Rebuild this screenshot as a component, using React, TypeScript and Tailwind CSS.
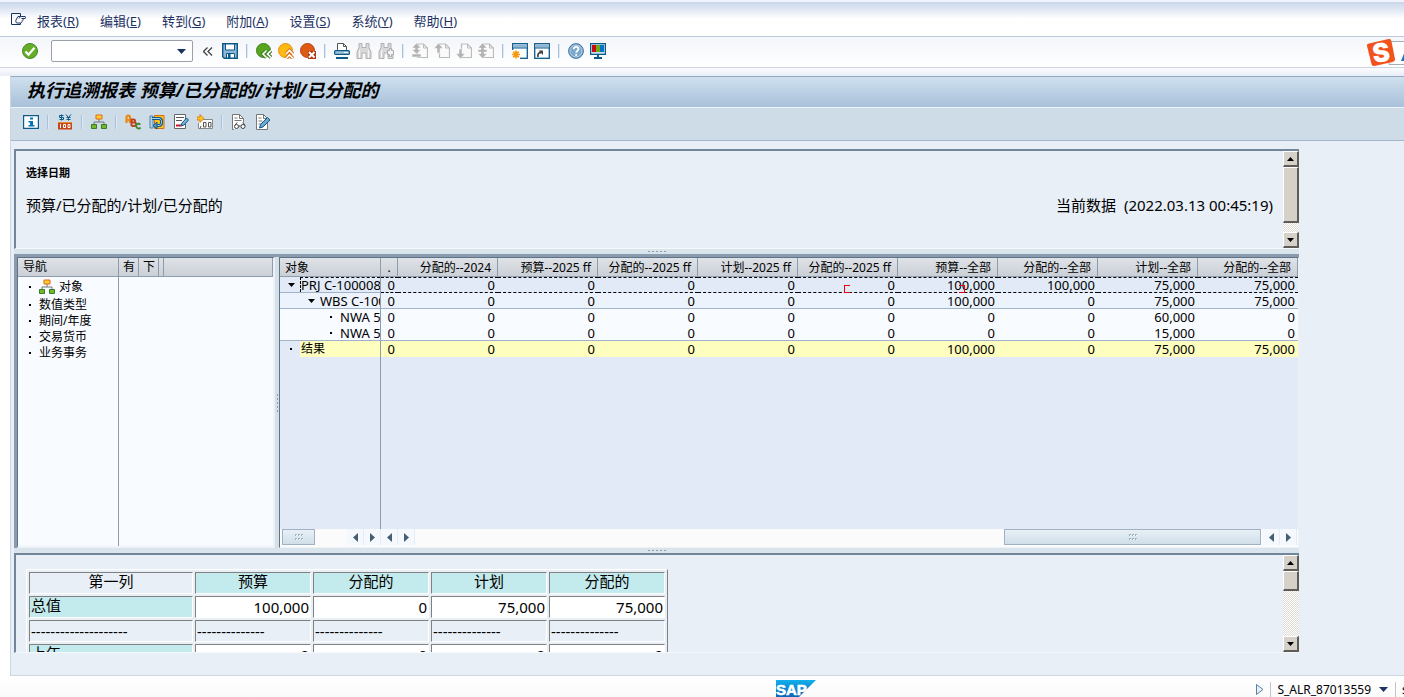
import React from 'react';
import clsx from 'clsx';

interface IconProps {
  children: React.ReactNode;
}

const Icon: React.FC<IconProps> = ({ children }) => (
  <svg width="16" height="16" viewBox="0 0 16 16" fill="none" aria-hidden="true">
    {children}
  </svg>
);

const CheckIcon = () => (
  <Icon>
    <circle cx="8" cy="8" r="7.5" fill="#65ae28" stroke="#468725" />
    <path d="M3.5 8.5l3 3.2 6-7" stroke="#fff" strokeWidth="2.2" />
  </Icon>
);

const SaveIcon = () => (
  <Icon>
    <path d="M.7.7h14.6v14.6H2.3L.7 13.7z" fill="#8fb8d6" stroke="#0b5a8a" strokeWidth="1.4" />
    <path d="M3.5 1h9v6h-9z" fill="#fff" stroke="#0b5a8a" />
    <path d="M4.5 10.5h8V15h-8z" fill="#fff" stroke="#0b5a8a" />
    <path d="M6 11h2.5v4H6z" fill="#0b5a8a" />
  </Icon>
);

const BackIcon = () => (
  <Icon>
    <circle cx="7.5" cy="7.5" r="7" fill="#58a51f" stroke="#3f7f22" />
    <path d="M10.5 7.5L7 11l3.5 3.5M15 7.5L11.5 11l3.5 3.5" stroke="#3f7f22" strokeWidth="3.8" />
    <path d="M10.5 7.5L7 11l3.5 3.5M15 7.5L11.5 11l3.5 3.5" stroke="#fff" strokeWidth="1.7" />
  </Icon>
);

const ExitIcon = () => (
  <Icon>
    <circle cx="7.5" cy="7.5" r="7" fill="#fdbb12" stroke="#ea8e13" />
    <path d="M8 11l3.5-3.5L15 11M8 15.5l3.5-3.5 3.5 3.5" stroke="#dd7010" strokeWidth="3.6" />
    <path d="M8 11l3.5-3.5L15 11M8 15.5l3.5-3.5 3.5 3.5" stroke="#fff" strokeWidth="1.6" />
  </Icon>
);

const CancelIcon = () => (
  <Icon>
    <circle cx="7.5" cy="7.5" r="7" fill="#dc5a14" stroke="#bb4410" />
    <path d="M8 8h8v8H8z" fill="#b43812" />
    <path d="M9 9l5.5 5.5M14.5 9L9 14.5" stroke="#fff" strokeWidth="2" />
  </Icon>
);

const PrintIcon = () => (
  <Icon>
    <path d="M3.5 7V.5h6l3 3V7" fill="#fff" stroke="#555" />
    <path d="M9.5.5v3h3" stroke="#555" />
    <rect x=".6" y="7.6" width="14.8" height="3.8" rx="1" fill="#9fc4de" stroke="#0b5a8a" strokeWidth="1.2" />
    <path d="M10 9.5h4" stroke="#fff" />
    <path d="M2 14h12v2H2z" fill="#0b5a8a" />
  </Icon>
);

const FindIcon = ({ next = false }: { next?: boolean }) => (
  <Icon>
    <path d="M3 .5h3v4h4v-4h3v4l2 4.5v6.500h-5V10H6v5.500H1V9l2-4.500z" fill="#d9d9d9" stroke="#b0b0b0" />
    <path d="M3.5 7v8M12.5 7v8" stroke="#f5f5f5" />
    {next && <path d="M9.5 7.5h2v-2h2v2h2v4h-2v2h-2v-2h-2z" fill="#f3f3f3" stroke="#aaa" />}
  </Icon>
);

const PageIcon = ({ arrows }: { arrows: string }) => (
  <Icon>
    <path d="M5.5 14.5h10V5L11.5 1h-6z" fill="#fafafa" stroke="#bbb" strokeWidth="1.2" />
    <path d="M11.5 1v4h4" stroke="#bbb" />
    <path d={arrows} fill="#b3b3b3" stroke="#fff" strokeWidth=".5" />
  </Icon>
);

const WindowIcon = ({ children }: { children: React.ReactNode }) => (
  <Icon>
    <rect x=".7" y=".7" width="14.6" height="14.6" fill="#fff" stroke="#0b5a8a" strokeWidth="1.3" />
    <path d="M1.5 1.5h13v3h-13z" fill="#8fb5d3" />
    <path d="M1 5h14" stroke="#0b5a8a" />
    {children}
  </Icon>
);

const HelpIcon = () => (
  <Icon>
    <circle cx="8" cy="8" r="7.4" fill="#7ba8cb" stroke="#3e75a3" />
    <circle cx="8" cy="8" r="6" stroke="#b4cfe2" />
    <path d="M5.7 6.2c0-3.300 4.800-3 4.800-.200 0 1.800-2.300 1.700-2.300 3.700M8.200 11v1.800" stroke="#fff" strokeWidth="1.8" />
  </Icon>
);

const MonitorIcon = () => (
  <Icon>
    <path d="M.6.6h14.800v10.800H.6z" fill="#c8dfef" stroke="#0b5a8a" strokeWidth="1.2" />
    <path d="M2 2h4v7H2z" fill="#c80c13" />
    <path d="M6 2h4v7H6z" fill="#6cad17" />
    <path d="M10 2h4v7h-4z" fill="#0574c5" />
    <path d="M8 11v3M4 15h8" stroke="#0b5a8a" strokeWidth="2" />
  </Icon>
);

const InfoIcon = () => (
  <Icon>
    <path d="M.6 1.600h14.800v12.800H.6z" fill="#fff" stroke="#0b5a8a" strokeWidth="1.2" />
    <path d="M7 3.5h3v2H7zM5.5 7H10v4h1.5v1.5h-6V11H7V8.5H5.5z" fill="#0574b5" />
  </Icon>
);

const CurrencyIcon = () => (
  <Icon>
    <path d="M6.5 1.5h-4v2h4v2h-4M4.5.5v6M9 .5l2.5 3 2.5-3M11.5 3v3.5M9.5 3.5h4M9.5 5.5h4" stroke="#0b5a8a" />
    <path d="M1 8h14v7.5H1z" fill="#c8441a" />
    <path d="M3.5 10v4M6.5 10.5h2v3h-2zM11 10.5h2v3h-2z" stroke="#fff" />
    <path d="M1 8.5h14" stroke="#e8912a" />
  </Icon>
);

const HierarchyIcon = () => (
  <Icon>
    <path d="M8 5v3M3 11V8h10v3" stroke="#777" />
    <path d="M5 1h6v4H5z" fill="#ffd02a" stroke="#e2661a" />
    <path d="M.5 10.5h5v4h-5zM10.5 10.5h5v4h-5z" fill="#74b823" stroke="#377c2b" />
  </Icon>
);

const AbcIcon = () => (
  <Icon>
    <path d="M1.5 9V3.5C1.5 1 5 1 5 3.5V9M1.5 6H5" stroke="#e78b15" strokeWidth="2.2" />
    <path d="M6.5 4.5V12M6.5 5.5h2.5c1.5 0 1.5 3 0 3H7h2.5c2 0 2 3.5 0 3.5h-3" stroke="#c1441c" strokeWidth="2" />
    <path d="M15.5 10.5c-3-2-5 0-4 2.5.8 2 3 2 4 .5" stroke="#3f8733" strokeWidth="2" />
  </Icon>
);

const SwapIcon = () => (
  <Icon>
    <path d="M5.5 1.5h9.5v13H5.5z" fill="#ffc51d" stroke="#da6b15" />
    <path d="M1 2h3v12H1z" fill="#b5d2e6" stroke="#4d85ad" />
    <path d="M3 4.5h7c3.5 0 3.5 7 0 7H7" stroke="#0b5a8a" strokeWidth="3" />
    <path d="M3 4.5h7c3.5 0 3.5 7 0 7H7" stroke="#b5d2e6" />
    <path d="M8 8L4 11.5 8 15z" fill="#5d94bb" stroke="#0b5a8a" />
  </Icon>
);

const EditTextIcon = () => (
  <Icon>
    <path d="M1.5.5h11v14h-11z" fill="#fff" stroke="#666" />
    <path d="M3 3.5h8M3 6.5h6" stroke="#555" />
    <path d="M3 10.5h5v2H3z" fill="#c8142c" />
    <path d="M8 12l1-3 4.5-5 2 2L11 11z" fill="#7fb2d6" stroke="#0b5a8a" />
  </Icon>
);

const DecimalsIcon = () => (
  <Icon>
    <path d="M6 5.5h9.5v9H1.5V9" fill="#fff" stroke="#888" />
    <path d="M0 3h3V.5l4 4-4 4V6H0z" fill="#ffc61c" stroke="#e07013" strokeWidth=".8" />
    <path d="M3 14.5l1-2.5M6.5 8.5h2.5V13H6.5zM11.5 8.5H14V13h-2.5z" stroke="#555" />
  </Icon>
);

const ViewDocIcon = () => (
  <Icon>
    <path d="M3 15.5H1.5V.5h7l4 4v4" fill="#fff" stroke="#777" />
    <path d="M8.5.5v4h4M3.5 4h3M3.5 6.5h7" stroke="#777" />
    <path d="M6 8.5l-2 3M12 8.5l2 3" stroke="#444" />
    <circle cx="5.5" cy="12.5" r="2" fill="#fff" stroke="#444" />
    <circle cx="12" cy="12.5" r="2" fill="#fff" stroke="#444" />
    <path d="M7.5 12h2" stroke="#444" />
  </Icon>
);

const EditDocIcon = () => (
  <Icon>
    <path d="M1.5.5h7l4 4v11h-11z" fill="#fff" stroke="#777" />
    <path d="M8.5.5v4h4M3.5 4h3M3.5 7h4M3.5 10h3" stroke="#777" />
    <path d="M4.5 14l1-3.5 7-7 2.5 2.5-7 7z" fill="#6fa6cc" stroke="#0b5a8a" />
  </Icon>
);

interface ToolItem {
  label: string;
  icon: React.ReactNode;
}

const navTools: ToolItem[][] = [
  [
    { label: '返回', icon: <BackIcon /> },
    { label: '退出', icon: <ExitIcon /> },
    { label: '取消', icon: <CancelIcon /> },
  ],
  [
    { label: '打印', icon: <PrintIcon /> },
    { label: '查找', icon: <FindIcon /> },
    { label: '继续查找', icon: <FindIcon next /> },
  ],
  [
    { label: '首页', icon: <PageIcon arrows="M4.5 0L9 5H6v1.5h3L4.5 11H9v3H0v-3h4.5L0 6.5h3V5H0z" /> },
    { label: '上一页', icon: <PageIcon arrows="M4.5 0L9 5.5H6V10H3V5.5H0z" /> },
    { label: '下一页', icon: <PageIcon arrows="M4.5 16L9 10.5H6V6H3v4.5H0z" /> },
    { label: '末页', icon: <PageIcon arrows="M4.5 0L9 5H6v1.5h3V9H6v1.5h3L4.5 15.5 0 10.5h3V9H0V6.5h3V5H0z" /> },
  ],
  [
    {
      label: '新建会话',
      icon: (
        <WindowIcon>
          <path d="M0 7h8v9H0z" fill="#fff" />
          <path d="M4 7.5v8M0 11.5h8M1.2 8.7l5.6 5.6M6.8 8.7l-5.600 5.600" stroke="#f49a12" strokeWidth="1.7" />
        </WindowIcon>
      ),
    },
    {
      label: '快捷方式',
      icon: (
        <WindowIcon>
          <path d="M4 14c-.5-3 .5-4.5 3-4.5" stroke="#444" strokeWidth="1.8" />
          <path d="M4.5 7.5H9V12z" fill="#444" />
        </WindowIcon>
      ),
    },
  ],
  [
    { label: '帮助', icon: <HelpIcon /> },
    { label: '定制布局', icon: <MonitorIcon /> },
  ],
];

const reportTools: ToolItem[][] = [
  [{ label: '信息', icon: <InfoIcon /> }],
  [{ label: '货币', icon: <CurrencyIcon /> }],
  [{ label: '层次', icon: <HierarchyIcon /> }],
  [
    { label: '文本', icon: <AbcIcon /> },
    { label: '交换', icon: <SwapIcon /> },
    { label: '编辑文本', icon: <EditTextIcon /> },
    { label: '小数位', icon: <DecimalsIcon /> },
  ],
  [
    { label: '显示凭证', icon: <ViewDocIcon /> },
    { label: '更改凭证', icon: <EditDocIcon /> },
  ],
];

const menus = [
  ['报表', 'R'],
  ['编辑', 'E'],
  ['转到', 'G'],
  ['附加', 'A'],
  ['设置', 'S'],
  ['系统', 'Y'],
  ['帮助', 'H'],
];

const columns = [
  '分配的--2024',
  '预算--2025 ff',
  '分配的--2025 ff',
  '计划--2025 ff',
  '分配的--2025 ff',
  '预算--全部',
  '分配的--全部',
  '计划--全部',
  '分配的--全部',
];

interface Row {
  name: string;
  kind: 'prj' | 'wbs' | 'nwa' | 'nwaLast' | 'total';
  values: string[];
}

const rows: Row[] = [
  { name: 'PRJ C-100008', kind: 'prj', values: ['0', '0', '0', '0', '0', '0', '100,000', '100,000', '75,000', '75,000'] },
  { name: 'WBS C-100', kind: 'wbs', values: ['0', '0', '0', '0', '0', '0', '100,000', '0', '75,000', '75,000'] },
  { name: 'NWA 5', kind: 'nwa', values: ['0', '0', '0', '0', '0', '0', '0', '0', '60,000', '0'] },
  { name: 'NWA 5', kind: 'nwaLast', values: ['0', '0', '0', '0', '0', '0', '0', '0', '15,000', '0'] },
  { name: '结果', kind: 'total', values: ['0', '0', '0', '0', '0', '0', '100,000', '0', '75,000', '75,000'] },
];

const cellStyles = {
  prj: 'border-y border-dashed border-black bg-[#e1eaf6]',
  wbs: 'border-b border-[#9fb3cb] bg-[#ecf3fc]',
  nwa: 'bg-[#f8fbff]',
  nwaLast: 'border-b border-[#9fb3cb] bg-[#f8fbff]',
  total: 'bg-[#fefebf]',
};

const nameCellStyles = {
  prj: 'border-b border-[#9fb3cb] bg-[#e1eaf6]',
  wbs: 'border-b border-[#9fb3cb] bg-[#ecf3fc]',
  nwa: 'bg-[#f8fbff]',
  nwaLast: 'border-b border-[#9fb3cb] bg-[#f8fbff]',
  total: 'bg-[#e1eaf6]',
};

const indentStyles = { prj: 'pl-0', wbs: 'pl-5', nwa: 'pl-10', nwaLast: 'pl-10', total: 'pl-0' };

const Separator = ({ className }: { className?: string }) => (
  <span className={clsx('h-3.5 w-0.5 border-l border-[#a9c1dc] bg-[#dfe9f4]', className)} />
);

const ToolButton: React.FC<{ item: ToolItem }> = ({ item }) => (
  <button type="button" aria-label={item.label} className="size-4 shrink-0">
    {item.icon}
  </button>
);

const Bullet = () => <span className="size-0.5 bg-black" />;

const Grip = () => (
  <span className="grid grid-cols-3 gap-x-px gap-y-0.5">
    {[0, 1, 2, 3, 4, 5].map((i) => (
      <span key={i} className="size-0.5 border-t border-l border-[#9fb2c3] bg-white" />
    ))}
  </span>
);

const ArrowButton = ({ dir, label }: { dir: 'left' | 'right'; label: string }) => (
  <button
    type="button"
    aria-label={label}
    className="flex h-4 w-[17px] shrink-0 items-center justify-center border-r border-[#e6ecf3] bg-[#f5f8fc]"
  >
    <svg width="5" height="9" viewBox="0 0 5 9" aria-hidden="true">
      <path d={dir === 'left' ? 'M5 0v9L0 4.5z' : 'M0 0v9l5-4.5z'} fill="#445f73" />
    </svg>
  </button>
);

const ScrollThumb = ({ className }: { className?: string }) => (
  <button
    type="button"
    aria-label="滚动"
    className={clsx(
      'flex h-4 items-center justify-center border border-[#9fb1c3] bg-linear-to-b from-[#e8f0f5] to-[#d0dfe9]',
      className,
    )}
  >
    <Grip />
  </button>
);

const bevel =
  'flex w-4 shrink-0 items-center justify-center border-t border-l border-r-2 border-b-2 border-t-white border-l-white border-r-[#5f5c58] border-b-[#5f5c58] bg-[#d5d0c8]';

// Classic vertical scroll bar: two arrow buttons, thumb and dithered track
const VerticalBar = ({ thumb }: { thumb: string }) => (
  <div className="flex w-4 shrink-0 flex-col bg-[repeating-conic-gradient(#dedbd5_0_25%,#ffffff_0_50%)] bg-[length:2px_2px]">
    <button type="button" aria-label="向上" className={clsx(bevel, 'h-4')}>
      <svg width="7" height="4" viewBox="0 0 7 4" aria-hidden="true">
        <path d="M0 4h7L3.5 0z" fill="#000" />
      </svg>
    </button>
    <button type="button" aria-label="滑块" className={clsx(bevel, thumb)} />
    <button type="button" aria-label="向下" className={clsx(bevel, 'mt-auto h-4')}>
      <svg width="7" height="4" viewBox="0 0 7 4" aria-hidden="true">
        <path d="M0 0h7L3.5 4z" fill="#000" />
      </svg>
    </button>
  </div>
);

const Splitter = () => (
  <div className="flex h-[5px] shrink-0 items-center justify-center gap-0.5 bg-[#dae4ec]">
    {[0, 1, 2, 3, 4].map((i) => (
      <span key={i} className="h-px w-0.5 bg-[#8f9ba6]" />
    ))}
  </div>
);

const headCell =
  'border-r border-b border-r-[#8e9dad] border-b-[#8e9dad] bg-linear-to-b from-[#dfe3e8] to-[#cbd0d7] pt-px pb-0 font-normal text-xs';

const MenuBar = () => (
  <nav className="flex h-[37px] shrink-0 items-center border-t-2 border-b border-t-[#f0f4fa] border-b-[#bfc9dc] bg-linear-to-b from-[#c9d6ea] to-white to-50% pt-1.5 pl-[11px] text-[13px] text-[#1c3263]">
    <svg width="15" height="13" viewBox="0 0 15 13" fill="none" className="mr-[11px] mb-1.5" aria-hidden="true">
      <path d="M9.5 3V.5h-9v11h9V10" stroke="#1c3263" />
      <path
        d="M8 5.5L9.5 3.5H14c1 0 1 2 0 2h-3.5M12 5.5c.5 2 0 2-.5 2M11 7.5c.5 2-.5 2-1.5 2.5H6c-1.5 0-1.5-3-.5-4L7 3.5h2.5"
        stroke="#1c3263"
      />
    </svg>
    <div className="flex gap-[21px]">
      {menus.map(([text, key]) => (
        <button type="button" key={text} className="whitespace-nowrap">
          {text}(<u>{key}</u>)
        </button>
      ))}
    </div>
  </nav>
);

const CommandBar = () => (
  <div className="flex h-[31px] shrink-0 items-center gap-1.5 border-b border-[#ccd4e2] bg-linear-to-b from-[#f3f6fa] to-white pb-0.5 pl-[22px]">
    <ToolButton item={{ label: '确认', icon: <CheckIcon /> }} />
    <div className="ml-[7px] flex h-[22px] w-[142px] items-center rounded-xs border border-[#9aa0a8] bg-white">
      <input type="text" aria-label="命令" className="min-w-0 flex-1 px-1 text-[13px] outline-none" />
      <button type="button" aria-label="打开列表" className="px-1.5">
        <svg width="9" height="5" viewBox="0 0 9 5" aria-hidden="true">
          <path d="M0 0h9L4.5 5z" fill="#1c3263" />
        </svg>
      </button>
    </div>
    <button type="button" aria-label="收起" className="mr-px ml-1 w-3">
      <svg width="10" height="9" viewBox="0 0 10 9" fill="none" aria-hidden="true">
        <path d="M4.5.5l-4 4 4 4M9 .5l-4 4 4 4" stroke="#444" strokeWidth="1.3" />
      </svg>
    </button>
    <ToolButton item={{ label: '保存', icon: <SaveIcon /> }} />
    {navTools.map((group) => (
      <React.Fragment key={group[0].label}>
        <Separator className="mx-0.5" />
        {group.map((item) => (
          <ToolButton key={item.label} item={item} />
        ))}
      </React.Fragment>
    ))}
  </div>
);

// Input method bar that floats over the right edge of the window
const ImeBadge = () => (
  <div className="absolute top-[39px] right-0 flex w-[37px] items-center overflow-hidden">
    <svg width="37" height="28" viewBox="0 0 37 28" aria-label="输入法">
      <path d="M22 2.5h16v23H22z" fill="#fff" stroke="#a9adb5" />
      <path d="M2 4.5Q-.5 5 0 7l4.5 18q.5 2.5 3 2l18-4q3-.7 2.5-3L24.5 2.5Q24-.5 21.5 0z" fill="#f2531d" />
      <text
        x="14"
        y="23"
        textAnchor="middle"
        fontFamily="Inter, sans-serif"
        fontWeight="900"
        fontSize="26"
        fill="#fff"
        transform="rotate(-8 14 14)"
      >
        S
      </text>
      <path d="M34 22l4-10v10z" fill="#1f72c4" />
    </svg>
  </div>
);

const NavigationPanel = () => (
  <section className="flex w-[258px] shrink-0 flex-col border-t border-r-2 border-b-2 border-l border-t-[#5f7489] border-r-[#edf2f6] border-b-[#edf2f6] border-l-[#5f7489] bg-[#f8fbff]">
    <div className="flex h-[19px] shrink-0 leading-[18px]">
      <div className={clsx(headCell, 'w-[101px] pl-[5px]')}>导航</div>
      <div className={clsx(headCell, 'w-5 pl-1')}>有</div>
      <div className={clsx(headCell, 'w-5 pl-1')}>下</div>
      <div className={clsx(headCell, 'w-[5px]')} />
      <div className={clsx(headCell, 'flex-1')} />
    </div>
    <div className="flex min-h-0 flex-1 text-xs leading-4">
      <ul className="w-[101px] border-r border-[#8e9dad]">
        <li className="flex h-5 items-center pl-[11px]">
          <Bullet />
          <span className="mr-1 ml-2">
            <HierarchyIcon />
          </span>
          对象
        </li>
        {['数值类型', '期间/年度', '交易货币', '业务事务'].map((text) => (
          <li key={text} className="flex h-4 items-center gap-2 pl-[11px]">
            <Bullet />
            {text}
          </li>
        ))}
      </ul>
    </div>
  </section>
);

const ReportGrid = () => (
  <section className="flex min-w-0 flex-1 flex-col border border-t-[#5f7489] border-r-[#edf2f6] border-b-[#edf2f6] border-l-[#5f7489] bg-[#e1eaf6]">
    <table className="w-full table-fixed border-separate border-spacing-0 text-[13px] leading-[14px]">
      <colgroup>
        <col className="w-[101px]" />
        <col className="w-[17px]" />
      </colgroup>
      <thead>
        <tr className="h-[19px]">
          <th className={clsx(headCell, 'pl-[5px] text-left')}>对象</th>
          <th className={clsx(headCell, 'text-center')}>.</th>
          {columns.map((title, i) => (
            <th key={i} className={clsx(headCell, 'pr-1.5 text-right whitespace-nowrap')}>
              {title}
            </th>
          ))}
        </tr>
      </thead>
      <tbody>
        {rows.map((row, r) => (
          <tr key={r} className="h-4">
            <td className={clsx('overflow-hidden border-r border-r-[#8e9dad] p-0 whitespace-nowrap', nameCellStyles[row.kind])}>
              <div className={clsx('flex', indentStyles[row.kind])}>
                <span className="flex w-5 shrink-0 items-center justify-center pl-0.5">
                  {row.kind === 'prj' || row.kind === 'wbs' ? (
                    <svg width="7" height="4" viewBox="0 0 7 4" aria-hidden="true">
                      <path d="M0 0h7L3.5 4z" fill="#000" />
                    </svg>
                  ) : (
                    <Bullet />
                  )}
                </span>
                <span
                  className={clsx(
                    'min-w-0 flex-1 overflow-hidden',
                    row.kind === 'prj' && 'border-t border-l border-dashed border-black',
                    row.kind === 'total' && 'bg-[#fefebf] pl-px text-xs leading-4',
                  )}
                >
                  {row.name}
                </span>
              </div>
            </td>
            {row.values.map((value, i) => (
              <td key={i} className={clsx('relative p-0 pr-[3px] text-right', cellStyles[row.kind])}>
                {value}
                {r === 0 && i === 5 && (
                  <span className="absolute top-[7px] left-[46px] z-10 h-2 w-1.5 border-y border-l border-red-600" />
                )}
                {r === 0 && i === 6 && (
                  <span className="absolute top-[7px] left-[61px] z-10 h-2 w-1.5 border-y border-r border-red-600" />
                )}
              </td>
            ))}
          </tr>
        ))}
      </tbody>
    </table>
    <div className="flex min-h-0 flex-1">
      <div className="w-[101px] border-r border-[#8e9dad]" />
    </div>
    <div className="flex h-[18px] shrink-0 items-start bg-[#fbfbfb] pr-px">
      <div className="flex w-[101px] shrink-0 items-center pl-0.5">
        <ScrollThumb className="w-[33px]" />
        <div className="flex-1" />
        <ArrowButton dir="left" label="左移" />
        <ArrowButton dir="right" label="右移" />
      </div>
      <ArrowButton dir="left" label="左移" />
      <ArrowButton dir="right" label="右移" />
      <div className="flex flex-1 justify-end pr-0.5">
        <ScrollThumb className="w-[257px]" />
      </div>
      <ArrowButton dir="left" label="左移" />
      <ArrowButton dir="right" label="右移" />
    </div>
  </section>
);

const summaryCell = 'border border-t-[#808080] border-r-white border-b-white border-l-[#808080] px-px';

const SummaryTable = () => (
  <table className="mt-3.5 ml-[10px] table-fixed border-separate border-spacing-0.5 border border-t-white border-r-[#808080] border-b-[#808080] border-l-white text-[15px] leading-5">
    <colgroup>
      <col className="w-[164px]" />
      <col className="w-[116px]" />
      <col className="w-[116px]" />
      <col className="w-[116px]" />
      <col className="w-[116px]" />
    </colgroup>
    <thead>
      <tr>
        <th className={clsx(summaryCell, 'pt-0 pb-1 leading-4 font-normal')}>第一列</th>
        {['预算', '分配的', '计划', '分配的'].map((title, i) => (
          <th key={i} className={clsx(summaryCell, 'bg-[#c3eaec] pt-0 pb-1 leading-4 font-normal')}>
            {title}
          </th>
        ))}
      </tr>
    </thead>
    <tbody>
      <tr>
        <td className={clsx(summaryCell, 'bg-[#c3eaec] pt-0 pb-1 leading-4')}>总值</td>
        {['100,000', '0', '75,000', '75,000'].map((value, i) => (
          <td key={i} className={clsx(summaryCell, 'bg-white py-0 text-right')}>
            {value}
          </td>
        ))}
      </tr>
      <tr>
        <td className={clsx(summaryCell, 'py-0')}>--------------------</td>
        {[0, 1, 2, 3].map((i) => (
          <td key={i} className={clsx(summaryCell, 'py-0')}>
            --------------
          </td>
        ))}
      </tr>
      <tr>
        <td className={clsx(summaryCell, 'bg-[#c3eaec] pt-0 pb-1 leading-4')}>上年</td>
        {[0, 1, 2, 3].map((i) => (
          <td key={i} className={clsx(summaryCell, 'bg-white py-0 text-right')}>
            0
          </td>
        ))}
      </tr>
    </tbody>
  </table>
);

const Footer = () => (
  <footer className="flex h-[21px] shrink-0 items-center overflow-hidden bg-linear-to-b from-white to-[#fafafa] pt-1.5">
    <svg width="40" height="18" viewBox="0 0 40 18" className="mr-[440px] mb-0.5 ml-auto shrink-0" aria-label="SAP">
      <defs>
        <linearGradient id="sap" x1="0" y1="0" x2="0" y2="1">
          <stop offset="0" stopColor="#12b0ec" />
          <stop offset="1" stopColor="#0a5fb8" />
        </linearGradient>
      </defs>
      <path d="M0 0h40L22 18H0z" fill="url(#sap)" />
      <text x="0" y="15" fontFamily="Liberation Sans, sans-serif" fontWeight="700" fontSize="15" fill="#fff" stroke="#fff" strokeWidth=".6">
        SAP
      </text>
    </svg>
    <button type="button" aria-label="展开" className="shrink-0">
      <svg width="8" height="11" viewBox="0 0 8 11" aria-hidden="true">
        <path d="M.5.5v10l6.5-5z" fill="#e5f0f8" stroke="#5a7f9f" />
      </svg>
    </button>
    <span className="mx-1.5 h-4 w-px shrink-0 bg-[#c4c4c4]" />
    <button type="button" className="flex shrink-0 items-center gap-2 text-xs">
      S_ALR_87013559
      <svg width="9" height="5" viewBox="0 0 9 5" aria-hidden="true">
        <path d="M0 0h9L4.5 5z" fill="#1c3263" />
      </svg>
    </button>
    <span className="mr-1.5 ml-[7px] h-4 w-px shrink-0 bg-[#c4c4c4]" />
    <span className="w-0.5 shrink-0 overflow-hidden text-xs">s</span>
  </footer>
);

const panel =
  'flex h-[100px] shrink-0 overflow-hidden border-t-2 border-l-2 border-b border-t-[#71869a] border-l-[#71869a] border-b-[#f6f9fb]';

export default function App() {
  return (
    <div className="relative flex h-screen min-h-[520px] flex-col overflow-hidden bg-white font-['Noto_Sans','Noto_Sans_CJK_SC',sans-serif] text-black">
      <MenuBar />
      <CommandBar />
      <ImeBadge />
      <div className="h-2 shrink-0 bg-linear-to-b from-[#fbfcfe] to-[#e8eef6]" />
      <div className="ml-[10px] flex min-h-0 flex-1 flex-col border-b border-l border-[#ccd5e3] bg-[#e8eff7]">
        <h1 className="flex h-8 shrink-0 items-center border-t border-b border-t-[#94a9c0] border-b-[#edf3f9] bg-linear-to-b from-[#cfe0ee] to-[#a8c0da] pb-1 pl-4 text-lg leading-7 font-bold italic">
          执行追溯报表 预算/已分配的/计划/已分配的
        </h1>
        <div className="flex h-[33px] shrink-0 items-center gap-2 border-b border-[#a5b5ca] bg-[#cddce7] pb-1 pl-3">
          {reportTools.map((group, g) => (
            <React.Fragment key={group[0].label}>
              {g > 0 && <Separator />}
              {group.map((item) => (
                <ToolButton key={item.label} item={item} />
              ))}
            </React.Fragment>
          ))}
        </div>

        <main className="mt-2 mr-[105px] mb-[22px] ml-[3px] flex min-h-0 flex-1 flex-col">
          <section className={panel}>
            <div className="flex-1 px-2.5 pt-3">
              <h2 className="text-[11px] leading-5 font-bold">选择日期</h2>
              <div className="mt-2.5 flex justify-between text-[15px] leading-6">
                <span>预算/已分配的/计划/已分配的</span>
                <span>当前数据&nbsp; (2022.03.13 00:45:19)</span>
              </div>
            </div>
            <VerticalBar thumb="h-14" />
          </section>
          <Splitter />
          <div className="flex min-h-0 flex-1 border-t-3 border-l-3 border-[#8a9bad]">
            <NavigationPanel />
            <div className="flex w-1 shrink-0 flex-col items-center justify-center gap-0.5 bg-[#d5e0e8]">
              {[0, 1, 2, 3, 4].map((i) => (
                <span key={i} className="h-0.5 w-px bg-[#8f9ba6]" />
              ))}
            </div>
            <ReportGrid />
          </div>
          <Splitter />
          <section className={panel}>
            <div className="flex-1 overflow-hidden">
              <SummaryTable />
            </div>
            <VerticalBar thumb="h-5" />
          </section>
        </main>
      </div>
      <Footer />
    </div>
  );
}
